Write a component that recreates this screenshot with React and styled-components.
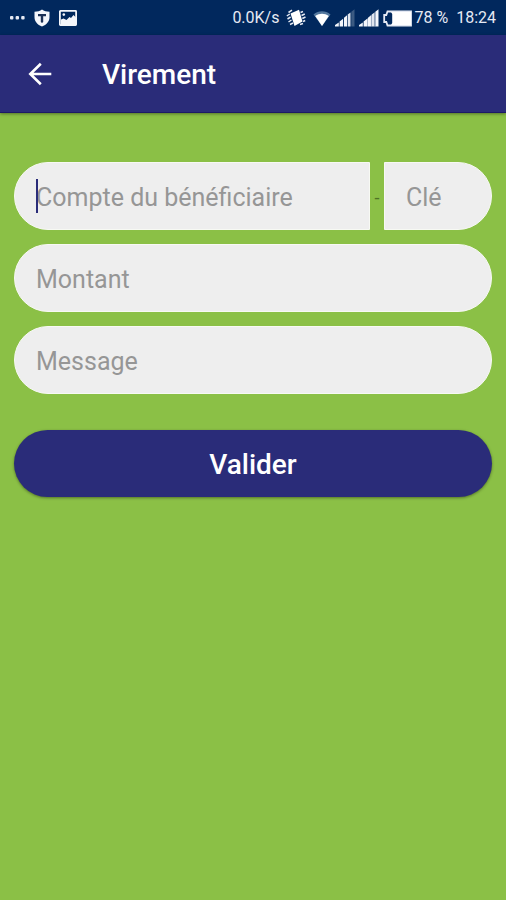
import React from "react";
import styled, { createGlobalStyle } from "styled-components";

const GlobalStyle = createGlobalStyle`
  *, *::before, *::after { box-sizing: border-box; }
  body {
    margin: 0;
    background: #8bc046;
    font-family: Roboto, "Noto Sans", sans-serif;
  }
`;

const Screen = styled.div`
  min-height: 100vh;
  display: flex;
  flex-direction: column;
  background: #8bc046;
`;

const StatusBar = styled.div`
  height: 35px;
  padding: 1px 10px 0;
  display: flex;
  align-items: center;
  justify-content: space-between;
  background: #01285d;
  color: #e6eaf4;
  font-size: 16px;
  line-height: 20px;
  white-space: nowrap;
`;

const StatusGroup = styled.div`
  display: flex;
  align-items: center;
  gap: ${(p) => p.$gap}px;

  svg {
    display: block;
    flex: none;
  }
`;

const AppBar = styled.header`
  position: relative;
  height: 78px;
  padding: 0 24px;
  display: flex;
  align-items: center;
  gap: 46px;
  background: #2a2c79;
  border-bottom: 1px solid #1c1a66;
  box-shadow: 0 1px 3px rgba(0, 0, 0, 0.4);
`;

const BackButton = styled.button`
  width: 32px;
  height: 32px;
  padding: 0;
  border: 0;
  background: none;
  color: #fff;
  cursor: pointer;

  svg { display: block; }
`;

const Title = styled.h1`
  margin: 0;
  padding-top: 2px;
  color: #fff;
  font-size: 28px;
  line-height: 32px;
  font-weight: 500;
`;

const Form = styled.form`
  padding: 49px 14px 0;
  display: flex;
  flex-direction: column;
  gap: 14px;
`;

const AccountRow = styled.div`
  display: flex;
  align-items: center;
`;

const FieldBox = styled.label`
  position: relative;
  display: block;
  min-width: 0;
  flex: ${(p) => p.$flex || "none"};
`;

const radii = {
  start: "34px 0 0 34px",
  end: "0 34px 34px 0",
  both: "34px",
};

const Input = styled.input`
  display: block;
  width: 100%;
  height: 68px;
  padding: 3px 21px 0;
  border: 1px solid #f7f9f3;
  border-radius: ${(p) => radii[p.$round]};
  background: #eeeeee;
  color: #333;
  caret-color: #2a2c79;
  font-family: inherit;
  font-size: 25px;
  outline: none;

  &::placeholder {
    color: #969696;
    opacity: 1;
  }
`;

const Caret = styled.span`
  position: absolute;
  left: 22px;
  top: 17px;
  width: 2px;
  height: 34px;
  background: #2a2c79;
`;

const Separator = styled.span`
  width: 14px;
  padding-top: 4px;
  flex: none;
  text-align: center;
  color: #4f7426;
  font-size: 18px;
  line-height: 20px;
`;

const SubmitButton = styled.button`
  height: 67px;
  margin-top: 22px;
  padding: 2px 0 0;
  border: 0;
  border-radius: 34px;
  background: #2a2c79;
  box-shadow: 0 1px 3px rgba(0, 0, 0, 0.4);
  color: #fff;
  font-family: inherit;
  font-size: 28px;
  font-weight: 500;
  cursor: pointer;
`;

const MoreIcon = () => (
  <svg width="15" height="4" viewBox="0 0 15 4" fill="#e6eaf4" aria-hidden="true">
    <rect x="0" y="0" width="3.4" height="3.4" rx="1" />
    <rect x="5.6" y="0" width="3.4" height="3.4" rx="1" />
    <rect x="11.2" y="0" width="3.4" height="3.4" rx="1" />
  </svg>
);

const ShieldIcon = () => (
  <svg width="16" height="18" viewBox="0 0 16 18" aria-hidden="true">
    <path d="M8 0.5C6 2 3.5 2.7 0.5 2.8V8c0 4.700 3 7.800 7.500 9.500 4.500-1.700 7.500-4.800 7.500-9.500V2.800C12.500 2.700 10 2 8 .5z" fill="#f4f6fb" />
    <path d="M4 5h8v2.200H9.200V13L8 14l-1.200-1V7.200H4z" fill="#1d3156" />
  </svg>
);

const PictureIcon = () => (
  <svg width="18" height="16" viewBox="0 0 18 16" aria-hidden="true">
    <rect x="0.9" y="0.9" width="16.2" height="14.2" rx="0.5" fill="#01285d" stroke="#f4f6fb" strokeWidth="1.800" />
    <circle cx="4.8" cy="4.6" r="1.300" fill="#f4f6fb" />
    <path d="M2 9.500l2.500-1L7.500 10l3-3 1.500 1 2.500-3 2.500 2.500V15H2z" fill="#f4f6fb" />
  </svg>
);

const VibrateIcon = () => (
  <svg width="20" height="18" viewBox="0 0 20 18" fill="none" stroke="#e6eaf4" aria-hidden="true">
    <path d="M4.500 4.500L13 0.800 16.500 12.500 8.500 17z" fill="#fff" stroke="none" />
    <path d="M6 1.200L2.500 3.500M3.800 5L0.800 7M4.600 8L1.500 10M5.500 11L2.500 13M7 14L4 15.500M14.500 3.500L17 2.500M15.500 6.500L18.800 5M16.300 9.500L19.500 8M17 12.500L19.200 11.500M14 15.500L17 14.500" strokeWidth="1.500" />
  </svg>
);

const WifiIcon = () => (
  <svg width="18" height="17" viewBox="0 0 18 17" aria-hidden="true">
    <path d="M.5 4.500C5.500.3 12.500.3 17.500 4.500L9 16z" fill="#53779d" />
    <path d="M2.200 6C6.500 3 11.500 3 15.800 6L9 16z" fill="#fff" />
  </svg>
);

const SignalIcon = ({ full }) => (
  <svg width="20" height="18" viewBox="0 0 20 18" aria-hidden="true">
    <path d="M0 17.500V16l3.800-2.500v4zM4.600 17.500v-5l3.500-2.700v7.700zM9 17.500V8.800L12 6.300v11.200z" fill="#f4f6fb" />
    <path d="M12.700 17.500V5.500L15.500 3.500v14z" fill="#e1e6ef" />
    <path d="M16.300 17.500V2.700L19.500.3v17.200z" fill={full ? "#f4f6fb" : "#3b5a82"} />
    {full && <path d="M8.500 17.500V9.500M12.400 17.500V6.300M15.900 17.500V3.500" stroke="#a9b6cb" />}
  </svg>
);

const BatteryIcon = () => (
  <svg width="29" height="17" viewBox="0 0 29 17" aria-hidden="true">
    <path d="M4.500 1.500H28v14H4.500L3.300 12H1.200V5h2.100z" fill="#01285d" stroke="#e6eaf4" strokeWidth="1.800" />
    <path d="M8 2h20v13H8l1.200-2V4z" fill="#fff" />
  </svg>
);

const ArrowIcon = () => (
  <svg width="32" height="32" viewBox="0 0 32 32" fill="none" stroke="currentColor" strokeWidth="2.600" aria-hidden="true">
    <path d="M27.300 16H6.500M16.800 5.800L6.300 16l10.500 10.200" />
  </svg>
);

export default function App() {
  return (
    <Screen>
      <GlobalStyle />
      <StatusBar>
        <StatusGroup $gap={9}>
          <MoreIcon />
          <ShieldIcon />
          <PictureIcon />
        </StatusGroup>
        <StatusGroup $gap={8}>
          <StatusGroup $gap={4}>
            <StatusGroup $gap={7}>
              <span>0.0K/s</span>
              <VibrateIcon />
              <WifiIcon />
            </StatusGroup>
            <SignalIcon />
            <SignalIcon full />
            <StatusGroup $gap={2}>
              <BatteryIcon />
              <span>78 %</span>
            </StatusGroup>
          </StatusGroup>
          <span>18:24</span>
        </StatusGroup>
      </StatusBar>
      <AppBar>
        <BackButton type="button" aria-label="Retour">
          <ArrowIcon />
        </BackButton>
        <Title>Virement</Title>
      </AppBar>
      <Form onSubmit={(e) => e.preventDefault()}>
        <AccountRow>
          <FieldBox $flex="356 1 0">
            <Input $round="start" placeholder="Compte du bénéficiaire" aria-label="Compte du bénéficiaire" />
            <Caret />
          </FieldBox>
          <Separator>-</Separator>
          <FieldBox $flex="108 1 0">
            <Input $round="end" placeholder="Clé" aria-label="Clé" />
          </FieldBox>
        </AccountRow>
        <FieldBox>
          <Input $round="both" placeholder="Montant" aria-label="Montant" />
        </FieldBox>
        <FieldBox>
          <Input $round="both" placeholder="Message" aria-label="Message" />
        </FieldBox>
        <SubmitButton type="submit">Valider</SubmitButton>
      </Form>
    </Screen>
  );
}
